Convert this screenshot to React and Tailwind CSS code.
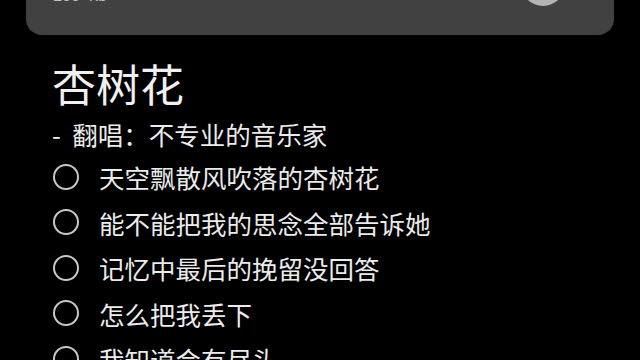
import React from 'react';

const lines = [
    '天空飘散风吹落的杏树花',
    '能不能把我的思念全部告诉她',
    '记忆中最后的挽留没回答',
    '怎么把我丢下',
    '我知道会有尽头',
];

function Line({ text }) {
    return (
        <li className='flex items-center h-[45.5px]'>
            <span className='ml-[1px] w-[26px] h-[26px] rounded-full border-2 border-[#c8c8c8] shrink-0' />
            <span className='ml-[20px] text-[25.5px] leading-none text-[#ebebeb] whitespace-nowrap'>{text}</span>
        </li>
    );
}

export default function App() {
    return (
        <div
            className='w-[640px] h-[360px] overflow-hidden bg-black'
            style={{ fontFamily: '"Noto Sans CJK SC", "Noto Sans", sans-serif' }}
        >
            <div className='mx-[26px] -mt-[45px] h-[80px] rounded-[16px] bg-[#414141] flex items-end justify-between pl-[27px] pr-[49px] pb-[30px]'>
                <span className='text-[15px] leading-none text-[#c0c0c0]' style={{ fontFamily: '"Liberation Mono", monospace' }}>100 Kb</span>
                <span className='w-[44px] h-[44px] rounded-full bg-[#b4b4b4] -mb-[1px]' />
            </div>
            <div className='px-[52px] pt-[20px]'>
                <h1 className='text-[44px] leading-[56px] text-[#f0f0f0]'>杏树花</h1>
                <p className='mt-[8px] text-[25.5px] leading-[30px] text-[#ebebeb] whitespace-nowrap'>-&nbsp;&nbsp;翻唱：不专业的音乐家</p>
                <ul className='mt-[5px]'>
                    {lines.map((l) => <Line key={l} text={l} />)}
                </ul>
            </div>
        </div>
    );
}
